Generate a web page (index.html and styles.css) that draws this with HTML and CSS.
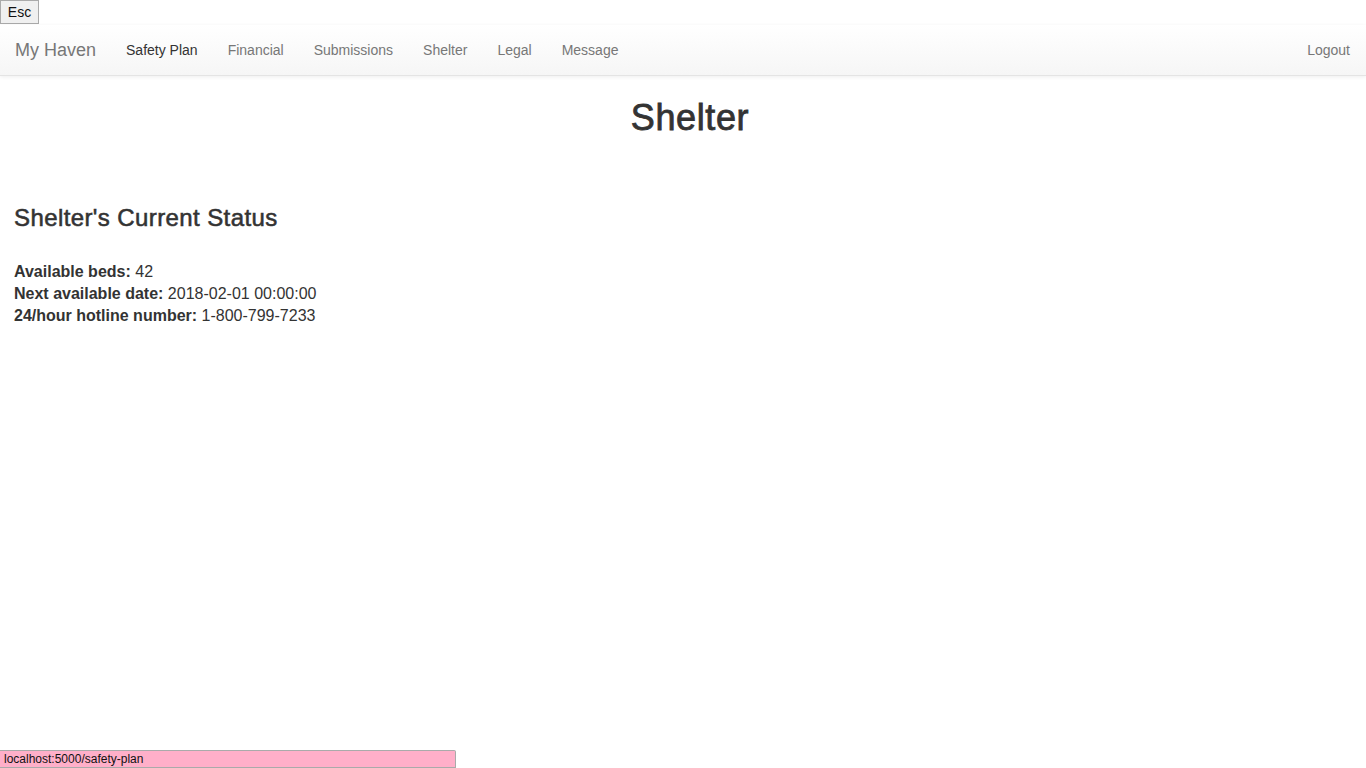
FILE: index.html
```html
<!DOCTYPE html>
<html>
<head>
<meta charset="utf-8">
<link rel="stylesheet" href="styles.css">
</head>
<body>
<div class="esc-bar"><button class="esc">Esc</button></div>
<nav class="navbar">
  <a class="brand" href="#">My Haven</a>
  <ul class="nav">
    <li><a class="active" href="#">Safety Plan</a></li>
    <li><a href="#">Financial</a></li>
    <li><a href="#">Submissions</a></li>
    <li><a href="#">Shelter</a></li>
    <li><a href="#">Legal</a></li>
    <li><a href="#">Message</a></li>
  </ul>
  <ul class="nav nav-right">
    <li><a href="#">Logout</a></li>
  </ul>
</nav>
<main class="content">
  <h1 class="title">Shelter</h1>
  <h3 class="subtitle">Shelter's Current Status</h3>
  <div class="status">
    <div><b>Available beds:</b> 42</div>
    <div><b>Next available date:</b> 2018-02-01 00:00:00</div>
    <div><b>24/hour hotline number:</b> 1-800-799-7233</div>
  </div>
</main>
<div class="statusbar">localhost:5000/safety-plan</div>
</body>
</html>
```

FILE: styles.css
```css
html, body {
  margin: 0;
  padding: 0;
  height: 100%;
}
body {
  font-family: "Liberation Sans", Arial, sans-serif;
  font-size: 14px;
  color: #333;
  background: #fff;
}
.esc-bar {
  height: 25px;
}
.esc {
  display: block;
  margin: 0;
  height: 24px;
  width: 39px;
  padding: 0;
  font-family: "Liberation Sans", Arial, sans-serif;
  font-size: 14px;
  color: #111;
  background: #f0f0f0;
  border: 1px solid #aaa;
  border-radius: 0;
}
.navbar {
  display: flex;
  align-items: center;
  height: 50px;
  background: linear-gradient(to bottom, #fff 0%, #f6f6f6 100%);
  border-bottom: 1px solid #e4e4e4;
  box-shadow: 0 1px 4px rgba(0,0,0,0.07);
}
.brand {
  padding: 0 15px;
  font-size: 18px;
  line-height: 50px;
  color: #777;
  text-decoration: none;
}
.nav {
  display: flex;
  list-style: none;
  margin: 0;
  padding: 0;
}
.nav a {
  display: block;
  padding: 0 15px;
  line-height: 50px;
  color: #777;
  text-decoration: none;
}
.nav a.active {
  color: #333;
}
.nav-right {
  margin-left: auto;
  margin-right: 0;
}
.nav-right a {
  padding-right: 16px;
}
.content {
  padding: 0 14px;
}
.title {
  margin: 22px 0 0;
  padding-left: 14px;
  text-align: center;
  font-size: 36px;
  font-weight: normal;
  letter-spacing: 0.6px;
  -webkit-text-stroke: 0.8px #333;
  line-height: 40px;
}
.subtitle {
  margin: 66px 0 0;
  font-size: 24px;
  font-weight: normal;
  letter-spacing: 0.4px;
  -webkit-text-stroke: 0.55px #333;
  line-height: 28px;
}
.status {
  margin-top: 29px;
  font-size: 16px;
  line-height: 22px;
}
.statusbar {
  position: fixed;
  left: 0;
  bottom: 0;
  width: 451px;
  height: 16px;
  padding-left: 4px;
  background: #ffafc9;
  border: 1px solid #aaa;
  border-left: none;
  border-radius: 0 2px 0 0;
  font-size: 12px;
  line-height: 16px;
  color: #111;
}
```
